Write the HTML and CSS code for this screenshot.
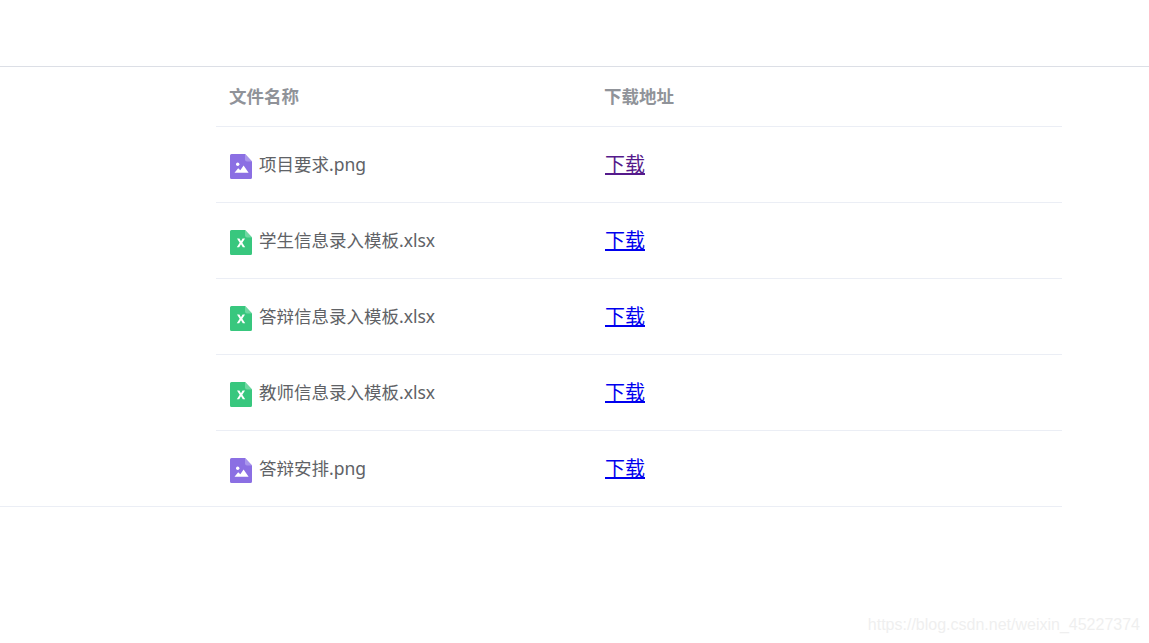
FILE: index.html
```html
<!DOCTYPE html>
<html lang="zh-CN">
<head>
<meta charset="utf-8">
<title>文件下载</title>
<link rel="stylesheet" href="styles.css">
</head>
<body>
<svg class="defs" width="0" height="0" aria-hidden="true">
  <defs>
    <symbol id="icon-image" viewBox="0 0 22 25">
      <path d="M1.5 0H15L22 7.5V23.5A1.5 1.5 0 0 1 20.5 25H1.5A1.5 1.5 0 0 1 0 23.5V1.5A1.5 1.5 0 0 1 1.5 0Z" fill="#8b6fe3"/>
      <path d="M15 0L22 7.5H17A2 2 0 0 1 15 5.5Z" fill="#a996ec"/>
      <circle cx="7.7" cy="10.2" r="1.7" fill="#fff"/>
      <path d="M4.5 18.8L8.2 14.2L10.3 16.2L13.6 11.6L18.6 18.8Z" fill="#fff"/>
    </symbol>
    <symbol id="icon-excel" viewBox="0 0 22 25">
      <path d="M1.5 0H15L22 7.5V23.5A1.5 1.5 0 0 1 20.5 25H1.5A1.5 1.5 0 0 1 0 23.5V1.5A1.5 1.5 0 0 1 1.5 0Z" fill="#38c77e"/>
      <path d="M15 0L22 7.5H17A2 2 0 0 1 15 5.5Z" fill="#6fd8a2"/>
      <path d="M7 8.5H9.4L11 11.2L12.6 8.5H15L12.3 12.7L15.2 17.2H12.8L11 14.3L9.2 17.2H6.8L9.7 12.7Z" fill="#fff"/>
    </symbol>
  </defs>
</svg>
<div class="topbar"></div>
<main class="content">
  <table class="files">
    <thead>
      <tr><th class="col-name">文件名称</th><th>下载地址</th></tr>
    </thead>
    <tbody>
      <tr>
        <td><span class="file"><svg class="icon"><use href="#icon-image"/></svg>项目要求.png</span></td>
        <td><a class="link visited" href="#a">下载</a></td>
      </tr>
      <tr>
        <td><span class="file"><svg class="icon"><use href="#icon-excel"/></svg>学生信息录入模板.xlsx</span></td>
        <td><a class="link" href="#b">下载</a></td>
      </tr>
      <tr>
        <td><span class="file"><svg class="icon"><use href="#icon-excel"/></svg>答辩信息录入模板.xlsx</span></td>
        <td><a class="link" href="#c">下载</a></td>
      </tr>
      <tr>
        <td><span class="file"><svg class="icon"><use href="#icon-excel"/></svg>教师信息录入模板.xlsx</span></td>
        <td><a class="link" href="#d">下载</a></td>
      </tr>
      <tr>
        <td><span class="file"><svg class="icon"><use href="#icon-image"/></svg>答辩安排.png</span></td>
        <td><a class="link" href="#e">下载</a></td>
      </tr>
    </tbody>
  </table>
</main>
<div class="watermark">https://blog.csdn.net/weixin_45227374</div>
</body>
</html>
```
FILE: styles.css
```css
html, body {
  margin: 0;
  padding: 0;
  height: 100%;
  overflow: hidden;
  background: #fff;
}
body {
  position: relative;
  font-family: "Noto Sans", "Noto Sans CJK SC", sans-serif;
}
.defs {
  display: block;
  height: 0;
}
.topbar {
  height: 66px;
  border-bottom: 1px solid #dcdfe6;
}
.content {
  width: 846px;
  padding-left: 216px;
  border-bottom: 1px solid #ebeef5;
}
.files {
  width: 846px;
  border-collapse: collapse;
  table-layout: fixed;
  font-size: 17.5px;
}
.col-name {
  width: 349px;
}
.files th {
  height: 57px;
  padding: 0 13px 2px;
  text-align: left;
  font-weight: 700;
  color: #909399;
  border-bottom: 1px solid #ebeef5;
}
.files td {
  height: 73px;
  padding: 0 13px 2px;
  color: #606266;
  border-bottom: 1px solid #ebeef5;
}
.files tbody tr:last-child td {
  border-bottom: 0;
}
.file {
  display: flex;
  align-items: center;
  gap: 7px;
  padding-left: 1px;
}
.icon {
  width: 22px;
  height: 25px;
  flex: none;
  margin-top: 5px;
}
.link {
  margin-left: 1px;
  font-size: 20px;
  color: #0000ee;
}
.link.visited {
  color: #551a8b;
}
.watermark {
  position: absolute;
  right: 9px;
  top: 616px;
  font-family: "Liberation Sans", sans-serif;
  font-size: 16px;
  color: #efefef;
}
```
